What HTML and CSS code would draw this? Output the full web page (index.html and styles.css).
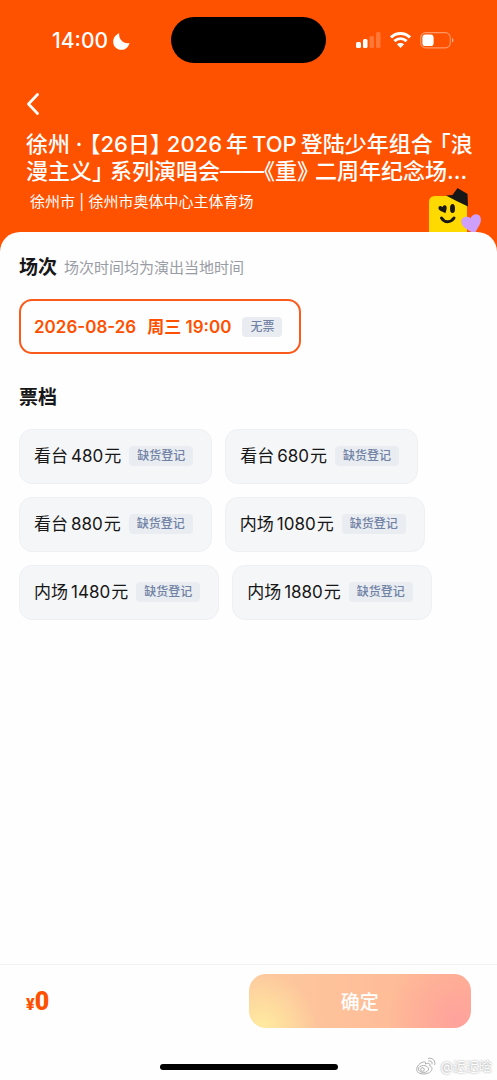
FILE: index.html
```html
<!DOCTYPE html>
<html lang="zh-CN">
<head>
<meta charset="utf-8">
<meta name="viewport" content="width=device-width, initial-scale=1">
<title>选择场次</title>
<link rel="stylesheet" href="styles.css">
</head>
<body>
<header class="header">
  <div class="status">
    <div class="clock">
      <span>14:00</span>
      <svg width="17" height="17" viewBox="0 0 17 17" aria-hidden="true"><path fill="#fff" d="M6.200.3C5.700 3.500 6.900 6.500 9.500 8.500C11.500 10.100 14 10.600 16.500 9.900C15.500 14 12.400 16.800 8.400 16.800C3.900 16.800.2 13.300.2 8.900C.2 5 2.700 1.700 6.200.3Z"/></svg>
    </div>
    <div class="island"></div>
    <div class="signals">
      <svg width="25" height="16" viewBox="0 0 25 16" aria-hidden="true" fill="#fff"><rect x="0" y="10" width="5" height="6" rx="1.500"/><rect x="7" y="7" width="4.500" height="9" rx="1.500"/><rect x="13.500" y="4" width="4.500" height="12" rx="1.500" opacity=".22"/><rect x="20" y="0" width="4.500" height="16" rx="1.500" opacity=".22"/></svg>
      <svg width="21" height="16" viewBox="0 0 21 16" aria-hidden="true" fill="none" stroke="#fff" stroke-width="2.900"><path d="M1 5.400C6.300.2 14.700.2 20 5.400"/><path d="M4.400 9.100C7.900 5.800 13.100 5.800 16.600 9.100"/><path fill="#fff" stroke="none" d="M10.500 15.900L6.900 12.300C8.900 10.400 12.100 10.400 14.100 12.300Z"/></svg>
      <svg width="34" height="17" viewBox="0 0 34 17" aria-hidden="true"><rect x=".7" y=".7" width="29.600" height="15.200" rx="5" fill="none" stroke="#fff" stroke-opacity=".4" stroke-width="1.200"/><rect x="2.400" y="2.500" width="11.200" height="11.600" rx="3.200" fill="#fff"/><path d="M32 5.800C33.900 6.600 33.900 10 32 10.800Z" fill="#fff" opacity=".5"/></svg>
    </div>
  </div>
  <button class="back" aria-label="返回"><svg width="14" height="22" viewBox="0 0 14 22" aria-hidden="true"><path d="M11.500 1.500L2.500 11L11.500 20.500" fill="none" stroke="#fff" stroke-width="2.700" stroke-linecap="round" stroke-linejoin="round"/></svg></button>
  <h1 class="title"><span class="line">徐州 ·<span class="mark before">【</span>26日<span class="mark">】</span> 2026<span class="han">年</span><span class="han">TOP</span><span class="han">登</span>陆少年组合<span class="mark before">「</span>浪</span><span class="line">漫主义<span class="mark after">」</span>系列演唱会——<span class="mark">《</span>重<span class="mark after">》</span>二周年纪念场...</span></h1>
  <p class="venue">徐州市 | 徐州市奥体中心主体育场</p>
  <svg class="mascot" width="54" height="44" viewBox="0 0 54 44" aria-hidden="true">
    <path fill="#ffda00" d="M1 14Q1 8 7 8H33Q39 8 39 14V44H1Z"/>
    <path fill="#171717" d="M18 7.500L24.500 7L29.500 0L39.500 6L40 18.500Q28 13 18 7.500Z"/>
    <path fill="#171717" d="M17.500 25C13.500 23.500 10 22 10.500 19.500C11 17.500 13.300 17.500 14.300 19.200C15.200 16.600 18 16.500 18.600 18.800C19 20.800 18.100 23 17.500 25Z"/>
    <ellipse cx="24.500" cy="20.500" rx="2.500" ry="4.500" fill="#171717"/>
    <path d="M13.500 30C16.500 35 22.500 35 26 30" fill="none" stroke="#171717" stroke-width="3" stroke-linecap="round"/>
    <path fill="#cfa0fb" d="M43.500 44C39 41.500 33 38.500 33.300 33.500C33.500 29 39 27.500 42.500 30.200C44.500 25.500 51 24.800 52.500 29.500C54.200 34.500 49.500 40 47.500 44Z"/>
  </svg>
</header>
<main class="sheet">
  <section class="group">
    <div class="heading"><h2>场次</h2><span class="hint">场次时间均为演出当地时间</span></div>
    <button class="chip selected"><span>2026-08-26</span><span>周三 19:00</span><span class="tag">无票</span></button>
  </section>
  <section class="group">
    <div class="heading"><h2>票档</h2></div>
    <div class="chips">
      <button class="chip"><span class="price">看台<span class="num">480</span>元</span><span class="tag">缺货登记</span></button>
      <button class="chip"><span class="price">看台<span class="num">680</span>元</span><span class="tag">缺货登记</span></button>
      <button class="chip"><span class="price">看台<span class="num">880</span>元</span><span class="tag">缺货登记</span></button>
      <button class="chip"><span class="price">内场<span class="num">1080</span>元</span><span class="tag">缺货登记</span></button>
      <button class="chip"><span class="price">内场<span class="num">1480</span>元</span><span class="tag">缺货登记</span></button>
      <button class="chip"><span class="price">内场<span class="num">1880</span>元</span><span class="tag">缺货登记</span></button>
    </div>
  </section>
</main>
<footer class="footer">
  <div class="checkout">
    <div class="total"><small>¥</small>0</div>
    <button class="confirm">确定</button>
  </div>
  <div class="home"></div>
  <div class="watermark">
    <svg width="20" height="18" viewBox="0 0 20 18" aria-hidden="true" fill="#fff" stroke="#999" stroke-width=".8"><path d="M7.500 5C4 5.500.7 9.500.7 12.300C.7 15.500 4 17 7.500 17C12.300 17 16 14.500 16 11.700C16 10 14.800 9.400 13.700 9C14.500 6.500 12.800 5.800 9.500 7C10 5.300 9.300 4.700 7.500 5Z"/><ellipse cx="7.500" cy="12" rx="5" ry="3.500"/><circle cx="6.500" cy="12.500" r="1.800"/><path d="M12 1.500C16.500.2 20 4 18.600 8M12.500 4C14.800 3.300 16.800 5.200 16 7.300" fill="none"/></svg>
    <span>@迟迟晗</span>
  </div>
</footer>
</body>
</html>
```
FILE: styles.css
```css
* { box-sizing: border-box; }

body {
  margin: 0;
  min-height: 100vh;
  display: flex;
  flex-direction: column;
  background: #fefefe;
  color: #171717;
  font-family: Inter, "Noto Sans CJK SC", sans-serif;
}

h1, h2, p { margin: 0; }

button {
  border: 0;
  padding: 0;
  background: none;
  color: inherit;
  font: inherit;
  cursor: pointer;
}

svg { display: block; }

.header {
  position: relative;
  height: 256px;
  background: #ff5200;
  color: #fff;
}

.status {
  display: grid;
  grid-template-columns: 1fr 155px 1fr;
  align-items: center;
  padding-top: 17px;
}

.clock {
  display: flex;
  align-items: center;
  justify-content: flex-end;
  gap: 5px;
  padding: 2px 41px 0 0;
  font-size: 21px;
  line-height: 24px;
  font-weight: 500;
}

.island {
  height: 46px;
  border-radius: 23px;
  background: #000;
}

.signals {
  display: flex;
  align-items: center;
  gap: 9px;
  padding-left: 30px;
}

.back {
  display: block;
  margin: 30px 0 0 26px;
}

.title {
  padding: 16px 0 0 26px;
  font-size: 22px;
  line-height: 27px;
  font-weight: 500;
  white-space: nowrap;
}

.line { display: block; }

.han { margin-left: 4px; }

/* half-width forms of the full-width brackets */
.mark { font-feature-settings: "halt"; }
.before { margin-left: 7px; }
.after { margin-right: 7px; }

.venue {
  padding: 7px 0 0 30px;
  font-size: 15px;
  line-height: 20px;
}

.mascot {
  position: absolute;
  right: 15px;
  bottom: 24px;
}

.sheet {
  position: relative;
  flex: 1;
  margin-top: -24px;
  padding: 24px 18px 0 19px;
  border-radius: 20px 20px 0 0;
  background: #fefefe;
}

.group { margin-bottom: 32px; }

.heading {
  display: flex;
  align-items: center;
  gap: 7px;
  height: 24px;
  margin-bottom: 19px;
}

h2 {
  font-size: 19px;
  line-height: 24px;
  font-weight: 600;
}

.hint {
  color: #9a9ca5;
  font-size: 15px;
  line-height: 20px;
}

.chips {
  display: flex;
  flex-wrap: wrap;
  gap: 13px;
}

.chip {
  display: flex;
  align-items: center;
  gap: 8px;
  height: 55px;
  padding: 0 18px 2px 14px;
  border: 1px solid #eef0f3;
  border-radius: 13px;
  background: #f5f6f8;
  font-size: 17px;
  line-height: 24px;
  white-space: nowrap;
}

.selected {
  gap: 11px;
  border: 2px solid #fa5a1c;
  padding: 0 17px 0 13px;
  background: #fefefe;
  color: #ff5000;
  font-weight: 600;
}

.num { margin: 0 1px 0 3px; }

.tag {
  padding: 0 8px;
  border-radius: 4px;
  background: #e9edf1;
  color: #7182a5;
  font-size: 12px;
  line-height: 20px;
  font-weight: 500;
}

.footer {
  position: relative;
  border-top: 1px solid #f3f3f3;
  padding: 9px 26px 10px;
}

.checkout {
  display: flex;
  align-items: center;
  justify-content: space-between;
}

.total {
  padding-top: 5px;
  color: #ff5000;
  font-family: Roboto, sans-serif;
  font-size: 25px;
  line-height: 28px;
  font-weight: 900;
}

.total small { font-size: 16px; }

.confirm {
  width: 50%;
  height: 54px;
  padding-bottom: 2px;
  border-radius: 17px;
  background:
    radial-gradient(circle at 6% 100%, #ffeb9f 0, #ffe49c00 55px),
    radial-gradient(circle at 94% 85%, #ffa29c 0, #ffa29c00 70px),
    linear-gradient(90deg, #fdca9f, #ffb493);
  color: #fff;
  font-size: 19px;
  font-weight: 500;
}

.home {
  width: 178px;
  height: 6px;
  margin: 36px auto 0;
  border-radius: 3px;
  background: #000;
}

.watermark {
  position: absolute;
  right: 5px;
  bottom: 4px;
  display: flex;
  align-items: center;
  gap: 4px;
  color: #fff;
  font-size: 13px;
  line-height: 20px;
  text-shadow: 0 0 2px #888;
}
```
